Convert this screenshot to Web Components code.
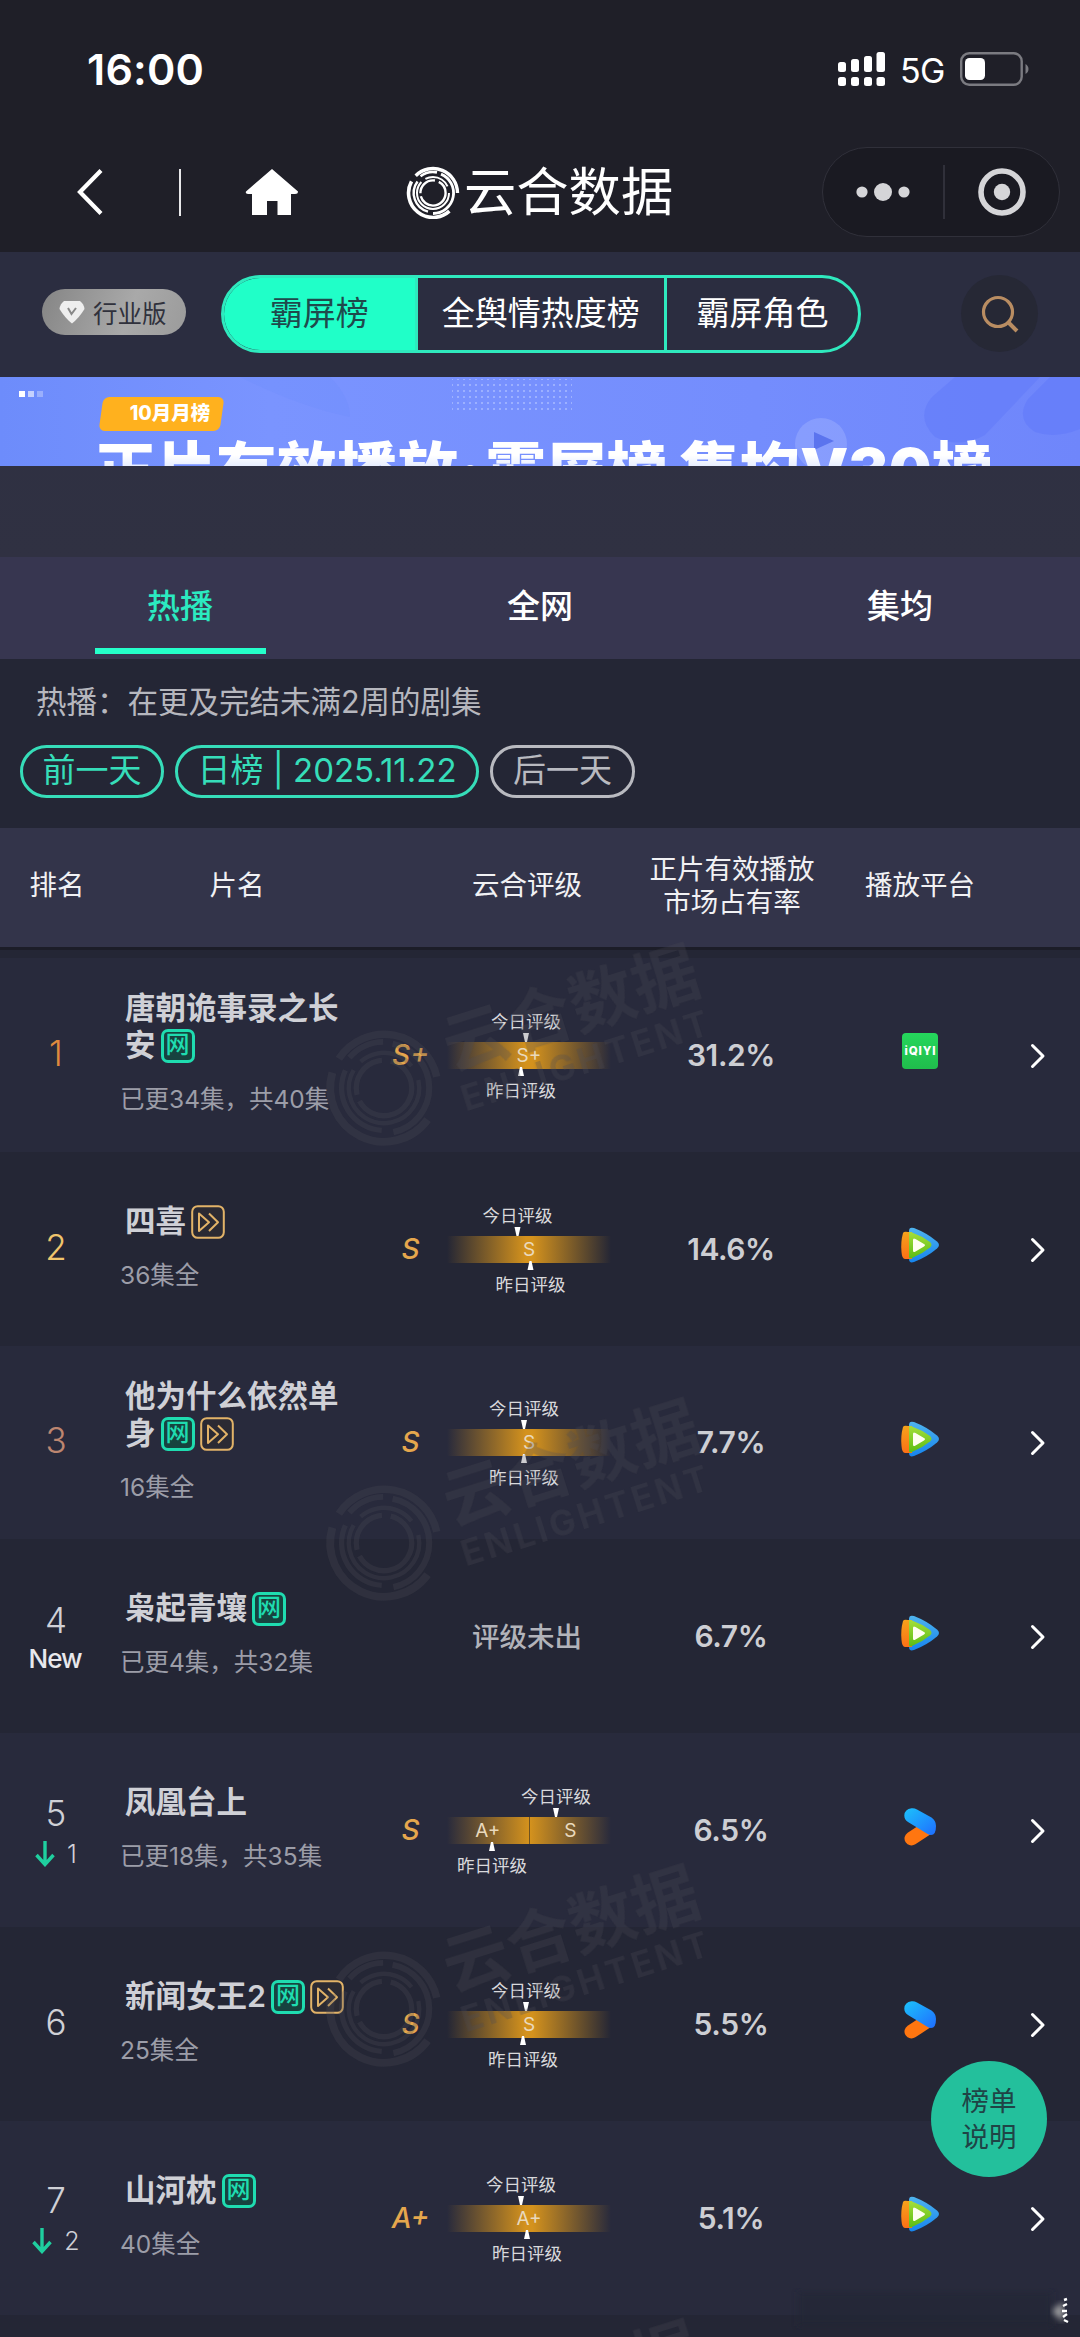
<!DOCTYPE html>
<html lang="zh-CN">
<head>
<meta charset="utf-8">
<meta name="viewport" content="width=device-width">
<title>云合数据</title>
<style>
  body {
    margin: 0;
    background: #242635;
    font-family: Inter, "Noto Sans CJK SC", sans-serif;
  }
</style>
</head>
<body>
<rank-page>
  <status-bar slot="top"></status-bar>
  <nav-bar slot="top">云合数据</nav-bar>
  <tool-bar slot="top"></tool-bar>
  <promo-banner slot="top"></promo-banner>
  <main-tabs slot="top"></main-tabs>
  <date-filter slot="top"></date-filter>
  <table-head slot="top"></table-head>

  <drama-row rank="1" color="#e08a3e" sub="已更34集，共40集" grade="S+" bar="S+" today="-3" last="-8" share="31.2%" platform="iqiyi">唐朝诡事录之长安<net-tag></net-tag></drama-row>
  <drama-row rank="2" color="#f0c46c" sub="36集全" grade="S" bar="S" today="-11.5" last="1.5" share="14.6%" platform="tencent">四喜<vip-tag></vip-tag></drama-row>
  <drama-row rank="3" color="#bd8670" sub="16集全" grade="S" bar="S" today="-5" last="-5" share="7.7%" platform="tencent">他为什么依然单身<net-tag></net-tag><vip-tag></vip-tag></drama-row>
  <drama-row rank="4" change="New" sub="已更4集，共32集" share="6.7%" platform="tencent">枭起青壤<net-tag></net-tag></drama-row>
  <drama-row rank="5" change="1" sub="已更18集，共35集" grade="S" bar="A+,S" today="27" last="-37" share="6.5%" platform="youku">凤凰台上</drama-row>
  <drama-row rank="6" sub="25集全" grade="S" bar="S" today="-3" last="-6" share="5.5%" platform="youku">新闻女王2<net-tag></net-tag><vip-tag></vip-tag></drama-row>
  <drama-row rank="7" change="2" sub="40集全" grade="A+" bar="A+" today="-8" last="-2" share="5.1%" platform="tencent">山河枕<net-tag></net-tag></drama-row>

  <water-mark slot="over" style="top: 1088px"></water-mark>
  <water-mark slot="over" style="top: 1543px"></water-mark>
  <water-mark slot="over" style="top: 2009px"></water-mark>
  <water-mark slot="over" style="top: 2464px"></water-mark>
  <help-button slot="over"></help-button>
  <corner-mark slot="over"></corner-mark>
</rank-page>

<script>
(() => {
  const define = (name, html, setup) => {
    const template = document.createElement('template');
    template.innerHTML = html;
    customElements.define(name, class extends HTMLElement {
      constructor() {
        super();
        this.attachShadow({ mode: 'open' });
        this.shadowRoot.appendChild(template.content.cloneNode(true));
      }

      connectedCallback() {
        if (setup) setup(this, this.shadowRoot);
      }
    });
  };

  // ring logo, shared by the nav bar and the watermark
  const rings = `
    <g fill="none" stroke="currentColor">
      <path d="M-17.300 -17.300A24.500 24.500 0 0 1 24.500 0" stroke-width="3.400"/>
      <path d="M-21.500 -11.700A24.500 24.500 0 0 0 16.400 18.200" stroke-width="3.600"/>
      <path d="M-12.500 -16.800A21 21 0 0 1 4 -20.600" stroke-width="2.600"/>
      <path d="M8 -18.900A20.500 20.500 0 0 1 0 20.500" stroke-width="2.800"/>
      <path d="M-15.500 -11.500A19.300 19.300 0 0 0 -5 18.600" stroke-width="2.400"/>
      <circle r="16" stroke-width="2" stroke-dasharray="62 5 26 7"/>
      <circle r="12.600" stroke-width="2.400" stroke-dasharray="36 3 22 4"/>
    </g>`;

  define('rank-page', `
    <style>
      :host {
        display: block;
        position: relative;
        width: 1080px;
        height: 2337px;
        overflow: hidden;
        background: #242635;
      }
      .list {
        display: flex;
        flex-direction: column;
        padding-top: 8px;
      }
    </style>
    <slot name="top"></slot>
    <div class="list"><slot></slot></div>
    <slot name="over"></slot>
  `);

  define('status-bar', `
    <style>
      :host {
        display: flex;
        align-items: center;
        justify-content: space-between;
        box-sizing: border-box;
        height: 138px;
        padding: 0 50px 0 87px;
        background: #1f1f28;
        color: #fff;
      }
      .time {
        font-size: 43px;
        font-weight: 600;
        letter-spacing: .2px;
      }
      .right {
        display: flex;
        align-items: center;
      }
      .net {
        margin: 3px 15px 0 14px;
        font-size: 34px;
        letter-spacing: -0.5px;
      }
    </style>
    <span class="time">16:00</span>
    <div class="right">
      <svg width="48" height="34" viewBox="0 0 48 34" fill="#fff">
        <rect x="0" y="10" width="8" height="10" rx="2.5"/>
        <rect x="13" y="7" width="8" height="13" rx="2.5"/>
        <rect x="26" y="4" width="8" height="16" rx="2.5"/>
        <rect x="38.500" y="0" width="8.500" height="20" rx="2.500"/>
        <rect x="0" y="25" width="8" height="9" rx="2.5"/>
        <rect x="13" y="25" width="8" height="9" rx="2.5"/>
        <rect x="26" y="25" width="8" height="9" rx="2.5"/>
        <rect x="38.500" y="25" width="8.500" height="9" rx="2.500"/>
      </svg>
      <span class="net">5G</span>
      <svg width="70" height="34" viewBox="0 0 70 34">
        <rect x="1.2" y="1.2" width="60.500" height="31.600" rx="8" fill="none" stroke="#7b7b81" stroke-width="2.4"/>
        <rect x="5" y="6" width="20" height="22" rx="4.500" fill="#fff"/>
        <path d="M65.500 12c4 2 4 8 0 10z" fill="#7b7b81"/>
      </svg>
    </div>
  `);

  define('nav-bar', `
    <style>
      :host {
        display: flex;
        align-items: center;
        box-sizing: border-box;
        height: 114px;
        padding: 0 20px 6px 75px;
        background: #1f1f28;
        color: #fff;
      }
      .line {
        width: 2px;
        height: 47px;
        margin: 0 64px 0 75px;
        background: #e8e8ea;
      }
      .logo {
        margin-left: 107px;
        margin-right: 4px;
      }
      .name {
        flex: 1;
        font-size: 52.300px;
        line-height: 60px;
        font-weight: 400;
      }
      .capsule {
        display: flex;
        align-items: center;
        justify-content: space-between;
        box-sizing: border-box;
        width: 238px;
        height: 90px;
        padding: 0 33px;
        border: 1.5px solid #30303a;
        border-radius: 45px;
        background: #1a1a22;
      }
      .capsule i {
        width: 1.5px;
        height: 54px;
        background: #30303a;
      }
    </style>
    <svg width="29" height="48" viewBox="0 0 29 48"><path d="M26 2.500L5 24L26 45.500" fill="none" stroke="#fff" stroke-width="4.200"/></svg>
    <div class="line"></div>
    <svg width="54" height="46" viewBox="0 0 54 46"><path d="M27 0L53 22.500Q53 25 50 25H46V46H32.500V32H22V46H7V25H3Q0 25 1 22.500Z" fill="#fff"/></svg>
    <svg class="logo" width="54" height="54" viewBox="-27 -28 54 54">${rings}</svg>
    <div class="name"><slot></slot></div>
    <div class="capsule">
      <svg width="54" height="20" viewBox="0 0 54 20" fill="#d5d5d8"><circle cx="6" cy="10" r="5.600"/><circle cx="27" cy="10" r="9"/><circle cx="48" cy="10" r="5.600"/></svg>
      <i></i>
      <svg width="48" height="48" viewBox="0 0 48 48"><circle cx="24" cy="24" r="21" fill="none" stroke="#d5d5d8" stroke-width="5.600"/><circle cx="24" cy="24" r="8.200" fill="#d5d5d8"/></svg>
    </div>
  `);

  define('tool-bar', `
    <style>
      :host {
        display: flex;
        align-items: center;
        box-sizing: border-box;
        height: 125px;
        padding: 0 42px 2px;
        background: #2b2d40;
        color: #fff;
      }
      .version {
        display: flex;
        align-items: center;
        gap: 8px;
        box-sizing: border-box;
        width: 144px;
        height: 46px;
        margin-top: -3px;
        padding-left: 17px;
        border-radius: 23px;
        background: linear-gradient(110deg, #858585, #a9a9a9 60%, #9b9b9b);
        color: #30313c;
        font-size: 24.500px;
      }
      .segments {
        display: flex;
        box-sizing: border-box;
        width: 641px;
        height: 78px;
        margin: 0 100px 0 35px;
        overflow: hidden;
        border: 3px solid #2fe9be;
        border-radius: 39px;
        font-size: 33px;
        line-height: 70px;
        text-align: center;
      }
      .segments span + span {
        border-left: 3px solid #2fe9be;
      }
      .on {
        width: 191px;
        background: #20ffc8;
        color: #1f4a4c;
      }
      .mid { width: 246px; }
      .last { flex: 1; }
      .search {
        display: flex;
        align-items: center;
        justify-content: center;
        width: 77px;
        height: 77px;
        border-radius: 50%;
        background: #262835;
      }
    </style>
    <div class="version">
      <svg width="26" height="24" viewBox="0 0 26 24"><path d="M5 1H21Q25 4 25.500 9Q20 18 13 23.500Q6 18 .5 9Q1 4 5 1Z" fill="#eee"/><path d="M9 8L12.500 14L17 8" fill="none" stroke="#888" stroke-width="2"/></svg>
      <span>行业版</span>
    </div>
    <div class="segments">
      <span class="on">霸屏榜</span><span class="mid">全舆情热度榜</span><span class="last">霸屏角色</span>
    </div>
    <div class="search">
      <svg width="40" height="40" viewBox="0 0 40 40" fill="none" stroke="#b98d62" stroke-width="3.200"><circle cx="18" cy="18" r="14.500"/><path d="M28 28L37 37" stroke-width="4"/></svg>
    </div>
  `);

  define('promo-banner', `
    <style>
      :host {
        display: block;
        height: 180px;
        background: linear-gradient(#2e3042, #303142);
      }
      .banner {
        display: grid;
        height: 89px;
        overflow: hidden;
        background: linear-gradient(90deg, #6d8cfb, #7a94ff 25%, #748dfd 70%, #6f86fb);
        color: #fff;
      }
      .banner > * {
        grid-area: 1 / 1;
      }
      .text {
        display: flex;
        flex-direction: column;
        align-items: flex-start;
      }
      .month {
        width: 121px;
        height: 34px;
        margin: 20px 0 0 101px;
        border-radius: 6px;
        background: #ffb11e;
        font-size: 19.500px;
        font-weight: 800;
        line-height: 33px;
        text-align: center;
        text-indent: 17px;
        transform: skewX(-8deg);
      }
      .month span {
        display: block;
        transform: skewX(8deg);
      }
      .title {
        margin: 2px 0 0 95px;
        font-size: 60.500px;
        font-weight: 900;
        line-height: 74px;
        white-space: pre;
        background: linear-gradient(#fff 30%, #cfdcff 60%);
        -webkit-background-clip: text;
        color: transparent;
      }
      .title i {
        padding: 0 4px 0 1px;
        font-style: normal;
      }
    </style>
    <div class="banner">
      <svg width="1080" height="89" viewBox="0 0 1080 89">
        <defs>
          <pattern id="dots" width="6" height="6" patternUnits="userSpaceOnUse"><circle cx="2" cy="2" r="1" fill="#a8bbff"/></pattern>
        </defs>
        <path d="M955 0H1040L985 58Q960 72 935 60Q915 40 932 20Z" fill="#657dfa" opacity=".7"/>
        <path d="M1050 0H1080V52Q1055 62 1035 55Q1015 42 1028 22Z" fill="#657dfa" opacity=".8"/>
        <path d="M240 0H330Q350 20 350 40Q300 30 240 0Z" fill="#6d8afa" opacity=".25"/>
        <rect x="452" y="2" width="120" height="32" fill="url(#dots)"/>
        <rect x="19" y="14" width="6" height="6" fill="#fff"/>
        <rect x="28" y="14" width="6" height="6" fill="#fff" opacity=".6"/>
        <rect x="37" y="14" width="6" height="6" fill="#fff" opacity=".3"/>
        <circle cx="821" cy="67" r="26" fill="#9fb2ff" opacity=".45"/>
        <path d="M814 55L834 64L814 73Z" fill="#5b74ee"/>
      </svg>
      <div class="text">
        <div class="month"><span>10月月榜</span></div>
        <div class="title">正片有效播放<i>·</i>霸屏榜 集均V30榜</div>
      </div>
    </div>
  `);

  define('main-tabs', `
    <style>
      :host {
        display: grid;
        grid-template-columns: repeat(3, 1fr);
        height: 102px;
        background: #373650;
        color: #fff;
        font-size: 33px;
        font-weight: 500;
        line-height: 48px;
        text-align: center;
      }
      span {
        display: flex;
        flex-direction: column;
        align-items: center;
        gap: 18px;
        padding-top: 25px;
      }
      .on { color: #2beac0; }
      .on::after {
        content: "";
        width: 171px;
        height: 6px;
        background: #25ffca;
      }
    </style>
    <span class="on">热播</span><span>全网</span><span>集均</span>
  `);

  define('date-filter', `
    <style>
      :host {
        display: block;
        box-sizing: border-box;
        height: 169px;
        padding: 21px 20px 0;
        background: #242635;
      }
      p {
        margin: 0 0 21px 16px;
        color: #b6b7be;
        font-size: 30.500px;
        line-height: 44px;
      }
      div {
        display: flex;
        gap: 11px;
      }
      span {
        box-sizing: border-box;
        width: 144px;
        height: 53px;
        border: 3px solid #36ddb9;
        border-radius: 27px;
        color: #36ddb9;
        font-size: 33px;
        line-height: 45px;
        text-align: center;
        white-space: nowrap;
      }
      .day { width: 304px; }
      .off {
        width: 145px;
        border-color: #b9bac0;
        color: #b9bac0;
      }
    </style>
    <p>热播：在更及完结未满2周的剧集</p>
    <div><span>前一天</span><span class="day">日榜 | 2025.11.22</span><span class="off">后一天</span></div>
  `);

  define('table-head', `
    <style>
      :host {
        display: grid;
        grid-template-columns: 114px 246px 87px 160px 250px 126px 1fr;
        align-items: center;
        box-sizing: border-box;
        height: 122px;
        padding-bottom: 4px;
        border-bottom: 3px solid #1c1d28;
        background: #33344a;
        color: #f1f1f4;
        font-size: 27.500px;
        line-height: 33px;
        text-align: center;
      }
    </style>
    <span>排名</span><span>片名</span><span></span><span>云合评级</span><span>正片有效播放<br>市场占有率</span><span>播放平台</span>
  `);

  define('net-tag', `
    <style>
      :host {
        display: inline-block;
        box-sizing: border-box;
        width: 34px;
        height: 34px;
        margin-left: 5px;
        overflow: hidden;
        border: 3px solid #1fdcb0;
        border-radius: 7px;
        background: #17433f;
        color: #1fdcb0;
        font-size: 24px;
        font-weight: 500;
        line-height: 26px;
        text-align: center;
        vertical-align: -7px;
      }
    </style>网
  `);

  define('vip-tag', `
    <style>
      :host {
        display: inline-block;
        width: 34px;
        height: 34px;
        margin-left: 5px;
        overflow: hidden;
        vertical-align: -7px;
      }
      svg { display: block; }
    </style>
    <svg width="34" height="34" viewBox="0 0 34 34" fill="none" stroke="#e2b368" stroke-width="2" stroke-linejoin="round">
      <rect x="1.200" y="1.200" width="31.600" height="31.600" rx="5.500" fill="#2b2a33"/>
      <path d="M8 8.500V26L18 17.200Z"/>
      <path d="M18 8.500L27 17.200L18 26"/>
    </svg>
  `);

  define('rating-gauge', `
    <style>
      :host {
        display: block;
        width: 164px;
        padding-top: 3px;
        color: #d9d9dc;
        font-size: 17.500px;
        line-height: 22px;
        text-align: center;
      }
      .mark {
        display: flex;
        flex-direction: column;
        align-items: center;
      }
      .last { margin-top: -2px; }
      .last b { margin-top: 4px; }
      b { font-weight: 400; }
      svg { display: block; }
      .bar {
        display: flex;
        height: 27px;
        color: #e9d9bd;
        font-size: 19px;
        line-height: 27px;
      }
      .bar span {
        flex: 1;
        background: linear-gradient(90deg, rgba(212, 146, 29, 0), #d4921d 48%, #d4921d 52%, rgba(212, 146, 29, 0));
      }
      .bar.two span { background: linear-gradient(90deg, rgba(212, 146, 29, 0), #d4921d); }
      .bar.two span + span {
        border-left: 1px solid #6f5220;
        background: linear-gradient(270deg, rgba(212, 146, 29, 0), #d4921d);
      }
    </style>
    <div class="mark today"><b>今日评级</b><svg width="8" height="9"><path d="M1 0H7L5 9H3Z" fill="#fff"/></svg></div>
    <div class="bar"></div>
    <div class="mark last"><svg width="8" height="9"><path d="M1 9H7L5 0H3Z" fill="#fff"/></svg><b>昨日评级</b></div>
  `, (el, root) => {
    const bar = root.querySelector('.bar');
    const grades = el.getAttribute('bar').split(',');
    bar.classList.toggle('two', grades.length > 1);
    bar.innerHTML = grades.map(g => `<span>${g}</span>`).join('');
    root.querySelector('.today').style.transform = `translateX(${el.getAttribute('today')}px)`;
    root.querySelector('.last').style.transform = `translateX(${el.getAttribute('last')}px)`;
  });

  const logos = {
    iqiyi: `
      <svg width="40" height="40" viewBox="0 0 40 40">
        <linearGradient id="q" x2="0" y2="1"><stop stop-color="#25d75c"/><stop offset="1" stop-color="#20bd4c"/></linearGradient>
        <rect x="2" y="2" width="36" height="36" rx="4" fill="url(#q)"/>
        <text x="20" y="24" fill="#fff" font-size="11.500" font-weight="800" text-anchor="middle" textLength="31">iQIYI</text>
      </svg>`,
    tencent: `
      <svg width="40" height="40" viewBox="0 0 40 40">
        <linearGradient id="b" x2="0" y2="1"><stop stop-color="#4fb4ee"/><stop offset="1" stop-color="#1684ee"/></linearGradient>
        <linearGradient id="o" x2="0" y2="1"><stop stop-color="#f5a31b"/><stop offset="1" stop-color="#fb7016"/></linearGradient>
        <linearGradient id="g" x2="0" y2="1"><stop stop-color="#a5de3a"/><stop offset="1" stop-color="#5cbd14"/></linearGradient>
        <path d="M9 6Q9 1.500 14 3Q27 8 37 16.500Q41 20 37 23.500Q27 32 14 37Q9 38.500 9 34Z" fill="url(#b)"/>
        <path d="M3 8Q4 6 8 7H12V34H5Q2 34 1.500 27Q.5 17 3 8Z" fill="url(#o)"/>
        <path d="M9 8Q9 6.500 12 7.500Q22 11 30 17Q33 20 30 22.500Q22 29 12 33Q9 34 9 32Z" fill="url(#g)"/>
        <path d="M13 15Q13 12.500 15.500 14L24 19Q26 20.200 24 21.500L15.500 26.500Q13 28 13 25.500Z" fill="#fffef0"/>
      </svg>`,
    youku: `
      <svg width="40" height="40" viewBox="0 0 40 40">
        <linearGradient id="y" x2="1" y2="1"><stop stop-color="#1cc2fb"/><stop offset="1" stop-color="#1f6dff"/></linearGradient>
        <path d="M11.500 31.500L26 22" stroke="#ff7610" stroke-width="14" stroke-linecap="round"/>
        <path d="M11.500 1.300Q14.500 1 17 2.500L31.500 10.500Q36 13.500 36 19Q36 28 31 28Q28.500 28 26 26L8 15Q4.300 12.500 4.300 8.500Q4.800 2 11.500 1.300Z" fill="url(#y)"/>
      </svg>`
  };

  define('platform-icon', `
    <style>
      :host { display: block; height: 40px; }
      svg { display: block; }
    </style>
  `, (el, root) => {
    root.innerHTML += logos[el.getAttribute('name')];
  });

  define('drama-row', `
    <style>
      :host {
        display: grid;
        grid-template-columns: 112px 262px 73px 164px 240px 138px 1fr;
        align-items: center;
        justify-items: center;
        flex: none;
        height: 193.800px;
        color: #cfd0d6;
      }
      :host(:nth-of-type(odd)) { background: #282a3c; }
      .rank {
        display: flex;
        flex-direction: column;
        align-items: center;
        padding-bottom: 4px;
        font-size: 35px;
        font-weight: 300;
        line-height: 40px;
      }
      .rank.moved {
        padding: 6px 0 0;
      }
      .change {
        display: flex;
        align-items: center;
        gap: 12px;
        margin-top: 1px;
        font-size: 25px;
      }
      .change.new {
        margin: -1px 0 0 -2px;
        color: #e8e8ec;
        font-size: 26px;
        font-weight: 500;
        letter-spacing: -1px;
      }
      .name {
        justify-self: start;
        width: 238px;
        padding-left: 8px;
        padding-bottom: 3px;
      }
      .title {
        padding-left: 5px;
        font-size: 30.500px;
        font-weight: 600;
        line-height: 37px;
        white-space: normal;
      }
      .sub {
        margin-top: 18px;
        color: #9c9da8;
        font-size: 24.500px;
        line-height: 36px;
        white-space: nowrap;
      }
      .grade {
        color: #e5a74d;
        font-size: 28px;
        font-style: italic;
        font-weight: 500;
      }
      .none {
        margin: -3px 0 0 -4px;
        color: #b2b3ba;
        font-size: 27.500px;
        font-weight: 500;
      }
      .share {
        color: #cdced3;
        font-size: 30px;
        font-weight: 600;
        letter-spacing: -.4px;
      }
      platform-icon { margin-top: -7px; }
      .go { margin-left: 7px; margin-top: 2px; }
    </style>
    <div class="rank"><span></span></div>
    <div class="name"><div class="title"><slot></slot></div><div class="sub"></div></div>
    <div class="grade"></div>
    <div class="gauge"></div>
    <div class="share"></div>
    <platform-icon name="tencent"></platform-icon>
    <svg class="go" width="16" height="26" viewBox="0 0 16 26"><path d="M2.500 2.500L13 13L2.500 23.500" fill="none" stroke="#fff" stroke-width="3" stroke-linecap="round" stroke-linejoin="round"/></svg>
  `, (el, root) => {
    const get = name => el.getAttribute(name) || '';
    const find = sel => root.querySelector(sel);
    const rank = find('.rank span');
    rank.textContent = get('rank');
    rank.style.color = get('color');
    const change = get('change');
    find('.rank').classList.toggle('moved', change !== '');
    if (change === 'New') {
      find('.rank').innerHTML += '<div class="change new">New</div>';
    } else if (change) {
      find('.rank').innerHTML += `
        <div class="change">
          <svg width="20" height="26" viewBox="0 0 20 26"><path d="M10 0V23M1.500 14L10 23.500L18.500 14" fill="none" stroke="#1fcf9f" stroke-width="3.400"/></svg>${change}
        </div>`;
    }
    find('.sub').textContent = get('sub');
    find('.grade').textContent = get('grade');
    find('.share').textContent = get('share');
    find('.gauge').innerHTML = get('bar')
      ? `<rating-gauge bar="${get('bar')}" today="${get('today')}" last="${get('last')}"></rating-gauge>`
      : '<div class="none">评级未出</div>';
    // swap in a named icon so it is connected with its attribute set
    const icon = document.createElement('platform-icon');
    icon.setAttribute('name', get('platform'));
    find('platform-icon').replaceWith(icon);
  });

  define('water-mark', `
    <style>
      :host {
        position: absolute;
        left: 384px;
        width: 0;
        height: 0;
        color: #4c4c56;
        opacity: .28;
        pointer-events: none;
      }
      svg {
        display: block;
        overflow: visible;
      }
    </style>
    <svg width="1" height="1">
      <g transform="scale(2.2) rotate(-12)">${rings}</g>
      <g transform="rotate(-17.5)" fill="currentColor">
        <text x="70" y="4" font-size="66" font-weight="700" textLength="264">云合数据</text>
        <text x="71" y="47" font-size="35" font-weight="700" textLength="257">ENLIGHTENT</text>
      </g>
    </svg>
  `);

  define('help-button', `
    <style>
      :host {
        position: absolute;
        left: 931px;
        top: 2061px;
        display: flex;
        align-items: center;
        justify-content: center;
        width: 116px;
        height: 116px;
        border-radius: 50%;
        background: #23c09c;
        color: #1f4446;
        font-size: 27.500px;
        line-height: 36px;
        text-align: center;
      }
    </style>
    <span>榜单<br>说明</span>
  `);

  define('corner-mark', `
    <style>
      :host {
        position: absolute;
        left: 790px;
        top: 2280px;
      }
      svg { display: block; }
    </style>
    <svg width="290" height="57" viewBox="0 0 290 57">
      <defs><filter id="soft"><feGaussianBlur stdDeviation="3"/></filter></defs>
      <rect x="8" y="12" width="254" height="34" fill="#242636" opacity=".6" filter="url(#soft)"/>
      <path d="M262 31L273 22V42Z" fill="#aaa" filter="url(#soft)"/>
      <path d="M274 20L277 19M273 26L277 24M272 31H277M273 37L277 34M274 40L278 42" stroke="#fff" stroke-width="2.400"/>
    </svg>
  `);
})();
</script>
</body>
</html>
